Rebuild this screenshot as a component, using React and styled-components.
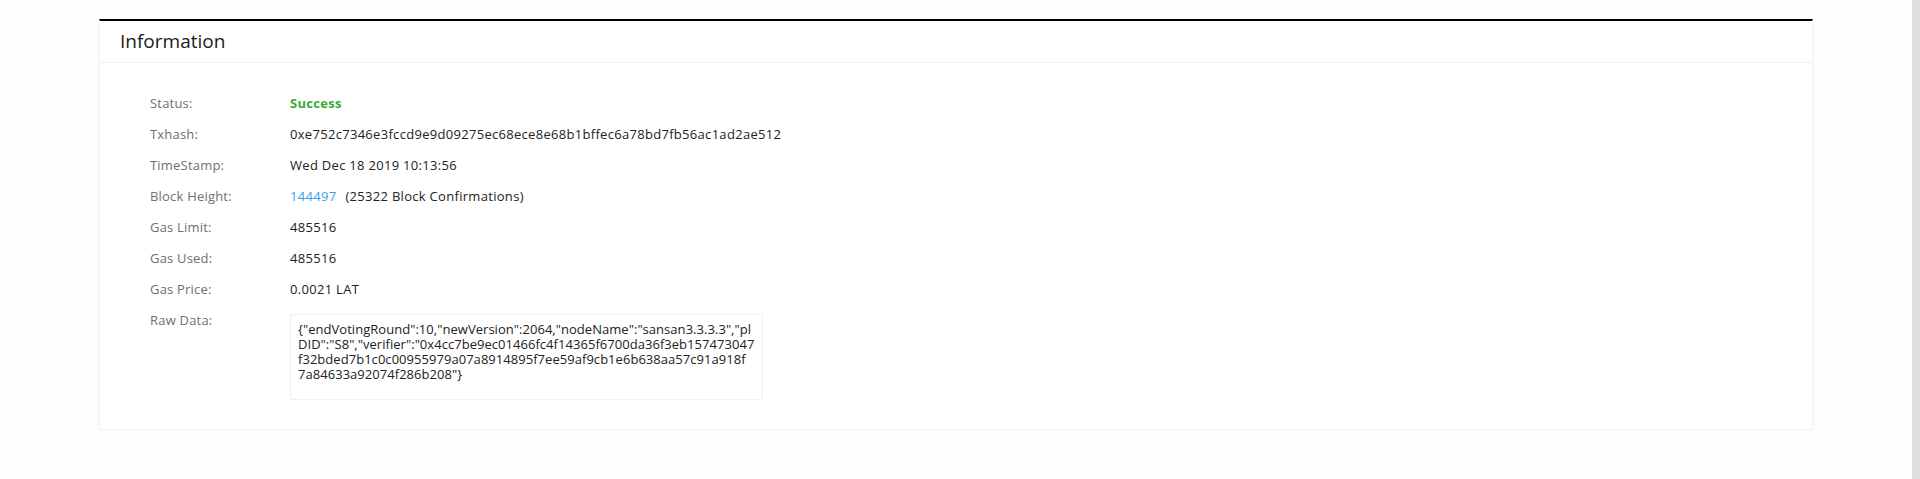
import React from "react";
import styled, { createGlobalStyle } from "styled-components";

const GlobalStyle = createGlobalStyle`
  html, body {
    margin: 0;
    padding: 0;
    background: #fdfdfd;
  }
  body {
    font-family: "Open Sans", "Liberation Sans", sans-serif;
  }
`;

const Page = styled.div`
  display: flex;
  height: 479px;
  overflow: hidden;
`;

const Content = styled.div`
  flex: 1;
  padding: 19px 99px 0;
`;

const ScrollStrip = styled.div`
  width: 8px;
  background: #dedede;
`;

const Card = styled.div`
  background: #fff;
  border: 1px solid #f0f0f0;
  border-top: 2px solid #000;
`;

const CardHeader = styled.div`
  height: 41px;
  line-height: 41px;
  padding-left: 20px;
  border-bottom: 1px solid #f0f0f0;
  font-size: 19px;
  color: #1a1a1a;
`;

const CardBody = styled.div`
  padding: 25px 0 29px 50px;
`;

const Row = styled.div`
  display: flex;
  align-items: flex-start;
  min-height: 31px;
  font-size: 13px;
  line-height: 31px;
`;

const Label = styled.div`
  width: 140px;
  flex-shrink: 0;
  color: #6f6f6f;
  letter-spacing: 0.2px;
`;

const Value = styled.div`
  color: ${(p) => p.$color || "#222"};
  font-weight: ${(p) => (p.$bold ? 700 : 400)};
  letter-spacing: 0.3px;
`;

const Link = styled.span`
  color: #3d9de6;
  margin-right: 9px;
`;

const RawBox = styled.div`
  width: 457px;
  margin-top: 9px;
  padding: 7px 7px 17px 7px;
  border: 1px solid #f0f0f0;
  line-height: 15px;
  letter-spacing: 0.04px;
  color: #222;
`;

const RawLine = styled.span`
  display: block;
  white-space: nowrap;
`;

const rawLines = [
  '{"endVotingRound":10,"newVersion":2064,"nodeName":"sansan3.3.3.3","pl',
  'DID":"S8","verifier":"0x4cc7be9ec01466fc4f14365f6700da36f3eb157473047',
  "f32bded7b1c0c00955979a07a8914895f7ee59af9cb1e6b638aa57c91a918f",
  '7a84633a92074f286b208"}',
];

const rows = [
  { label: "Status:", value: "Success", color: "#3aa838", bold: true },
  {
    label: "Txhash:",
    value: "0xe752c7346e3fccd9e9d09275ec68ece8e68b1bffec6a78bd7fb56ac1ad2ae512",
  },
  { label: "TimeStamp:", value: "Wed Dec 18 2019 10:13:56" },
  {
    label: "Block Height:",
    value: (
      <>
        <Link>144497</Link>(25322 Block Confirmations)
      </>
    ),
  },
  { label: "Gas Limit:", value: "485516" },
  { label: "Gas Used:", value: "485516" },
  { label: "Gas Price:", value: "0.0021 LAT" },
];

export default function App() {
  return (
    <Page>
      <GlobalStyle />
      <Content>
        <Card>
          <CardHeader>Information</CardHeader>
          <CardBody>
            {rows.map((r) => (
              <Row key={r.label}>
                <Label>{r.label}</Label>
                <Value $color={r.color} $bold={r.bold}>
                  {r.value}
                </Value>
              </Row>
            ))}
            <Row>
              <Label>Raw Data:</Label>
              <RawBox>
                {rawLines.map((line) => (
                  <RawLine key={line}>{line}</RawLine>
                ))}
              </RawBox>
            </Row>
          </CardBody>
        </Card>
      </Content>
      <ScrollStrip />
    </Page>
  );
}
